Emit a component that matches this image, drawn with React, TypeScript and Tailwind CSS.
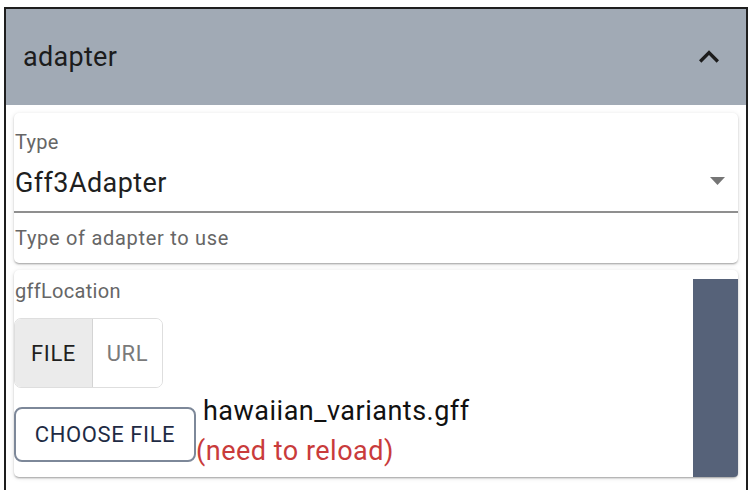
import { useState } from 'react';

const font = { fontFamily: 'Roboto, "Noto Sans", Arial, sans-serif' };

function ExpandLess() {
  return (
    <svg viewBox="0 0 24 24" className="w-[40px] h-[40px]" fill="#1c1c1c">
      <path d="M12 8l-6 6 1.41 1.41L12 10.83l4.59 4.58L18 14z" />
    </svg>
  );
}

function TypeSelect() {
  return (
    <div className="bg-white rounded-[5px] shadow-[0_2px_2px_-1px_rgba(0,0,0,0.2),0_1px_2px_0_rgba(0,0,0,0.14),0_1px_5px_0_rgba(0,0,0,0.12)] h-[150px] flex flex-col">
      <div className="text-[20px] leading-[24px] mt-[17px] pl-[1px] text-[#666] tracking-[0.3px]">Type</div>
      <div className="mt-[13px] pb-[12px] border-b-2 border-[#8f8f8f] flex items-center justify-between pl-[1px] pr-[13px]">
        <span className="text-[27px] leading-[32px] text-[#1f1f1f] tracking-[0.4px]">Gff3Adapter</span>
        <svg width="15" height="8" viewBox="0 0 15 8" className="mt-[-4px]">
          <polygon points="0,0 15,0 7.5,8" fill="#757575" />
        </svg>
      </div>
      <div className="text-[20px] leading-[24px] mt-[13px] pl-[1px] text-[#666] tracking-[0.7px]">
        Type of adapter to use
      </div>
    </div>
  );
}

function LocationCard() {
  const [mode, setMode] = useState<'file' | 'url'>('file');
  return (
    <div className="bg-white rounded-[5px] shadow-[0_2px_2px_-1px_rgba(0,0,0,0.2),0_1px_2px_0_rgba(0,0,0,0.14),0_1px_5px_0_rgba(0,0,0,0.12)] h-[207px] flex">
      <div className="flex-1 flex flex-col pt-[9px]">
        <div className="text-[20px] leading-[24px] pl-[1px] text-[#666] tracking-[0.3px]">gffLocation</div>
        <div className="mt-[15px] flex w-[149px] h-[70px] border-[1.5px] border-[#dedede] rounded-[7px] overflow-hidden">
          <button
            onClick={() => setMode('file')}
            className={`w-[78px] h-full flex items-center justify-center text-[22px] font-normal tracking-[0.6px] border-r-[1.5px] border-[#d4d4d4] ${mode === 'file' ? 'bg-[#ebebeb] text-[#1f1f1f]' : 'bg-white text-[#7a7a7a]'}`}
          >
            FILE
          </button>
          <button
            onClick={() => setMode('url')}
            className={`flex-1 h-full flex items-center justify-center text-[22px] font-normal tracking-[0.6px] ${mode === 'url' ? 'bg-[#ebebeb] text-[#1f1f1f]' : 'bg-white text-[#7a7a7a]'}`}
          >
            URL
          </button>
        </div>
        <div className="mt-[3px] flex items-start">
          <button className="mt-[16px] w-[182px] h-[55px] border-2 border-[#7d8899] rounded-[8px] text-[22px] font-normal tracking-[0.6px] text-[#1e2b44] bg-white">
            CHOOSE FILE
          </button>
          <div className="flex flex-col text-[27px] leading-[40px] tracking-[0.5px]">
            <span className="pl-[7px] text-[#111]">hawaiian_variants.gff</span>
            <span className="text-[#c93b3b]">(need to reload)</span>
          </div>
        </div>
      </div>
      <div className="w-[45px] mt-[9px] bg-[#566279] rounded-br-[4px]" />
    </div>
  );
}

export default function App() {
  return (
    <div className="w-[754px] h-[490px] overflow-hidden bg-white pt-[7px] pl-[4px]" style={font}>
      <div className="w-[744px] h-[600px] border-2 border-[#1e1e1e]">
        <div className="h-[96px] bg-[#a1aab5] flex items-center justify-between pl-[17px] pr-[17px]">
          <span className="text-[27px] text-[#1c1c1c] tracking-[0.3px]">adapter</span>
          <ExpandLess />
        </div>
        <div className="px-2 pt-2 flex flex-col gap-[7px]">
          <TypeSelect />
          <LocationCard />
        </div>
      </div>
    </div>
  );
}
